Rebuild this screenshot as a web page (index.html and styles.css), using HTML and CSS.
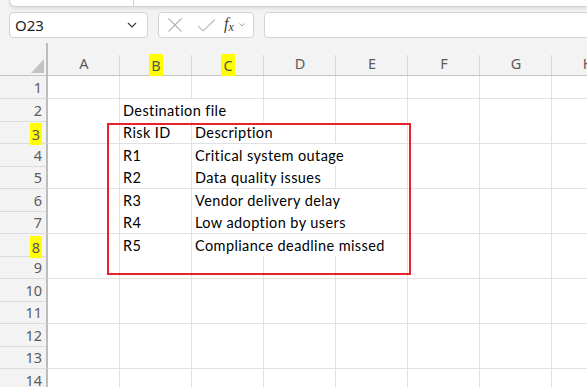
FILE: index.html
```html
<!DOCTYPE html>
<html lang="en">

<head>
  <meta charset="UTF-8" />
  <title>Destination file</title>
  <link rel="stylesheet" href="styles.css">
</head>

<body>
  <div class="app">
    <!-- Ribbon edge -->
    <div class="ribbon-edge"><span class="ribbon-divider"></span></div>

    <!-- Formula bar -->
    <div class="formula-row">
      <div class="name-box">
        <span>O23</span>
        <svg width="10" height="6" viewBox="0 0 10 6"><path d="M1 1l4 4 4-4" fill="none" stroke="#3a3a3a" stroke-width="1.2" /></svg>
      </div>
      <div class="fx-box">
        <svg class="fx-cancel" width="16" height="14" viewBox="0 0 16 14"><path d="M1.5 0.5l13 13M14.5 0.5l-13 13" stroke="#b4b4b4" stroke-width="1.1" fill="none" /></svg>
        <svg class="fx-enter" width="19" height="13" viewBox="0 0 19 13"><path d="M0.8 6.8l5.2 5.2 12-11.5" stroke="#bcbcbc" stroke-width="1.1" fill="none" /></svg>
        <span class="fx">f<sub>x</sub></span>
        <svg class="fx-more" width="6" height="4" viewBox="0 0 6 4"><path d="M0.5 0.5l2.5 2.5 2.5-2.5" stroke="#9a9a9a" stroke-width="0.9" fill="none" /></svg>
      </div>
      <div class="formula-input"></div>
    </div>

    <!-- Sheet -->
    <div class="sheet">
      <div class="row head">
        <div class="corner"><svg width="13" height="14" viewBox="0 0 13 14"><path d="M13 0v14H0z" fill="#c2c2c2" /></svg></div>
        <div class="col-head">A</div>
        <div class="col-head"><mark class="hl">B</mark></div>
        <div class="col-head"><mark class="hl">C</mark></div>
        <div class="col-head">D</div>
        <div class="col-head">E</div>
        <div class="col-head">F</div>
        <div class="col-head">G</div>
        <div class="col-head">H</div>
      </div>

      <div class="row">
        <div class="row-head">1</div>
        <div class="cell"></div><div class="cell"></div><div class="cell"></div><div class="cell"></div>
        <div class="cell"></div><div class="cell"></div><div class="cell"></div><div class="cell"></div>
      </div>
      <div class="row">
        <div class="row-head">2</div>
        <div class="cell"></div>
        <div class="cell span-2">Destination file</div>
        <div class="cell"></div><div class="cell"></div><div class="cell"></div><div class="cell"></div><div class="cell"></div>
      </div>
      <div class="row">
        <div class="row-head"><mark class="hl">3</mark></div>
        <div class="cell"></div>
        <div class="cell">Risk ID</div>
        <div class="cell span-2">Description</div>
        <div class="cell"></div><div class="cell"></div><div class="cell"></div><div class="cell"></div>
      </div>
      <div class="row">
        <div class="row-head">4</div>
        <div class="cell"></div>
        <div class="cell">R1</div>
        <div class="cell span-3">Critical system outage</div>
        <div class="cell"></div><div class="cell"></div><div class="cell"></div>
      </div>
      <div class="row">
        <div class="row-head">5</div>
        <div class="cell"></div>
        <div class="cell">R2</div>
        <div class="cell span-2">Data quality issues</div>
        <div class="cell"></div><div class="cell"></div><div class="cell"></div><div class="cell"></div>
      </div>
      <div class="row">
        <div class="row-head">6</div>
        <div class="cell"></div>
        <div class="cell">R3</div>
        <div class="cell span-3">Vendor delivery delay</div>
        <div class="cell"></div><div class="cell"></div><div class="cell"></div>
      </div>
      <div class="row">
        <div class="row-head">7</div>
        <div class="cell"></div>
        <div class="cell">R4</div>
        <div class="cell span-3">Low adoption by users</div>
        <div class="cell"></div><div class="cell"></div><div class="cell"></div>
      </div>
      <div class="row">
        <div class="row-head"><mark class="hl">8</mark></div>
        <div class="cell"></div>
        <div class="cell">R5</div>
        <div class="cell span-3">Compliance deadline missed</div>
        <div class="cell"></div><div class="cell"></div><div class="cell"></div>
      </div>
      <div class="row">
        <div class="row-head">9</div>
        <div class="cell"></div><div class="cell"></div><div class="cell"></div><div class="cell"></div>
        <div class="cell"></div><div class="cell"></div><div class="cell"></div><div class="cell"></div>
      </div>
      <div class="row">
        <div class="row-head">10</div>
        <div class="cell"></div><div class="cell"></div><div class="cell"></div><div class="cell"></div>
        <div class="cell"></div><div class="cell"></div><div class="cell"></div><div class="cell"></div>
      </div>
      <div class="row">
        <div class="row-head">11</div>
        <div class="cell"></div><div class="cell"></div><div class="cell"></div><div class="cell"></div>
        <div class="cell"></div><div class="cell"></div><div class="cell"></div><div class="cell"></div>
      </div>
      <div class="row">
        <div class="row-head">12</div>
        <div class="cell"></div><div class="cell"></div><div class="cell"></div><div class="cell"></div>
        <div class="cell"></div><div class="cell"></div><div class="cell"></div><div class="cell"></div>
      </div>
      <div class="row">
        <div class="row-head">13</div>
        <div class="cell"></div><div class="cell"></div><div class="cell"></div><div class="cell"></div>
        <div class="cell"></div><div class="cell"></div><div class="cell"></div><div class="cell"></div>
      </div>
      <div class="row">
        <div class="row-head">14</div>
        <div class="cell"></div><div class="cell"></div><div class="cell"></div><div class="cell"></div>
        <div class="cell"></div><div class="cell"></div><div class="cell"></div><div class="cell"></div>
      </div>
    </div>

    <!-- Red frame drawn over the table -->
    <div class="callout-frame"></div>
  </div>
</body>

</html>
```

FILE: styles.css
```css
body {
  margin: 0;
  background-color: #f3f3f3;
}

.app {
  position: relative;
  width: 587px;
  height: 387px;
  overflow: hidden;
  background-color: #f3f3f3;
  font-family: "Noto Sans", "Open Sans", sans-serif;
}

/* Ribbon edge */
.ribbon-edge {
  display: flex;
  height: 6px;
  margin-left: 9px;
  background-color: #ffffff;
  border-left: 1px solid #d8d8d8;
  border-bottom: 1px solid #d2d2d2;
  border-bottom-left-radius: 8px;
  box-shadow: 0 1px 4px rgba(0, 0, 0, 0.12);
}

.ribbon-divider {
  width: 1px;
  margin-left: 123px;
  background-color: #d0d0d0;
}

/* Formula bar */
.formula-row {
  display: flex;
  gap: 10px;
  height: 26px;
  margin-top: 5px;
  padding-left: 9px;
}

.name-box,
.fx-box,
.formula-input {
  box-sizing: border-box;
  height: 26px;
  background-color: #ffffff;
  border: 1px solid #d3d3d3;
  border-radius: 4px;
}

.name-box {
  display: flex;
  align-items: center;
  justify-content: space-between;
  width: 139px;
  padding: 0 10px 0 5px;
  font-size: 15px;
  color: #1e1e1e;
}

.fx-box {
  display: flex;
  align-items: center;
  width: 96px;
  padding-left: 8px;
}

.fx-enter {
  margin-left: 14px;
}

.fx {
  margin-left: 8px;
  font-family: "Liberation Serif", serif;
  font-style: italic;
  font-size: 16px;
  color: #3c3c3c;
}

.fx sub {
  font-size: 12px;
  vertical-align: -2px;
}

.fx-more {
  margin-left: 5px;
}

.formula-input {
  flex: 1;
  margin-right: -10px;
}

/* Sheet */
.sheet {
  margin-top: 5px;
}

.row {
  display: grid;
  grid-template-columns: 48px repeat(8, 72px);
  height: 22.5px;
}

.row.head {
  height: 33px;
}

.corner {
  display: flex;
  align-items: flex-end;
  justify-content: flex-end;
  padding: 0 2px 2px 0;
  border-right: 2px solid #bcbcbc;
  border-bottom: 1px solid #c4c4c4;
}

.col-head {
  display: flex;
  justify-content: center;
  align-items: flex-end;
  padding-bottom: 1px;
  font-size: 14.5px;
  line-height: 21px;
  color: #5c5c5c;
  border-bottom: 1px solid #c4c4c4;
  background: linear-gradient(#d9d9d9, #d9d9d9) right bottom / 1px 20px no-repeat;
}

.row-head {
  padding-right: 4px;
  text-align: right;
  font-size: 14.5px;
  line-height: 22px;
  color: #5c5c5c;
  border-right: 2px solid #bcbcbc;
  border-bottom: 1px solid #dcdcdc;
}

.hl {
  display: inline-block;
  padding: 0 2px;
  height: 22px;
  line-height: 22px;
  background-color: #ffff00;
  color: #555555;
}

.row-head .hl {
  transform: translateY(2px);
}

.col-head .hl {
  transform: translateY(2px);
}

.cell {
  padding-left: 3px;
  overflow: hidden;
  white-space: nowrap;
  font-family: "Lato", sans-serif;
  font-size: 14.5px;
  letter-spacing: 0.4px;
  line-height: 24px;
  color: #000000;
  background-color: #ffffff;
  border-right: 1px solid #e1e1e1;
  border-bottom: 1px solid #e1e1e1;
}

.span-2 {
  grid-column: span 2;
}

.span-3 {
  grid-column: span 3;
}

/* Red frame */
.callout-frame {
  position: absolute;
  left: 107px;
  top: 122.5px;
  width: 300px;
  height: 148px;
  border: 2px solid #e8222a;
}
```
